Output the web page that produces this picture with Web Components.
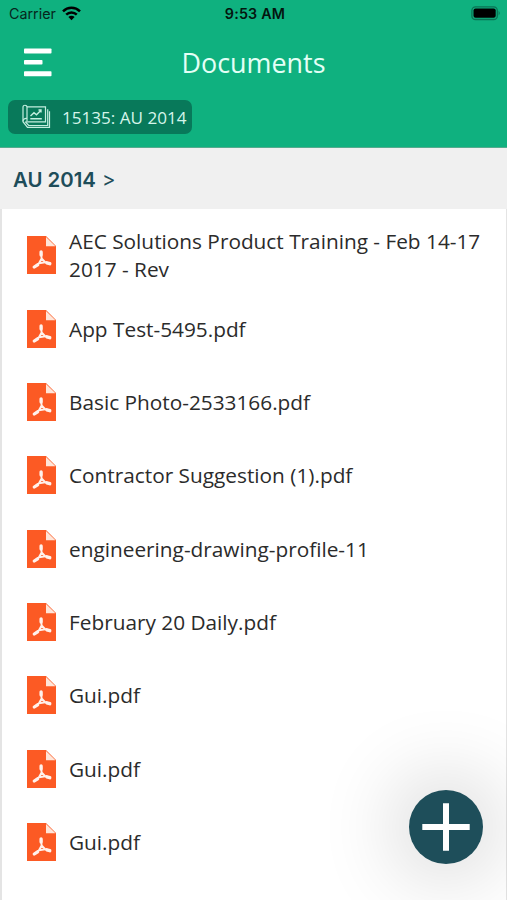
<!DOCTYPE html>
<html lang="en">
<head>
<meta charset="utf-8">
<title>Documents</title>
<style>
  body {
    margin: 0;
    height: 900px;
    overflow: hidden;
    background: #fff;
    font-family: "Open Sans", "Noto Sans", sans-serif;
  }
</style>
</head>
<body>
<docs-app>
  <status-bar slot="header" carrier="Carrier" time="9:53 AM"></status-bar>
  <nav-bar slot="header">Documents</nav-bar>
  <project-chip slot="header">15135: AU 2014</project-chip>
  <bread-crumb slot="path">AU 2014</bread-crumb>
  <file-row>AEC Solutions Product Training - Feb 14-17 2017 - Rev</file-row>
  <file-row>App Test-5495.pdf</file-row>
  <file-row>Basic Photo-2533166.pdf</file-row>
  <file-row>Contractor Suggestion (1).pdf</file-row>
  <file-row>engineering-drawing-profile-11</file-row>
  <file-row>February 20 Daily.pdf</file-row>
  <file-row>Gui.pdf</file-row>
  <file-row>Gui.pdf</file-row>
  <file-row>Gui.pdf</file-row>
  <add-button slot="action"></add-button>
</docs-app>

<script>
class BaseElement extends HTMLElement {
  constructor() {
    super(); // !required!
    this.dom = this.attachShadow({ mode: "open" });
    const template = document.createElement("template");
    template.innerHTML = this.markup();
    this.dom.appendChild(document.importNode(template.content, true));
  }

  markup() {
    return "<slot></slot>";
  }
}

class DocsApp extends BaseElement {
  markup() {
    return `
      <style>
        :host { display: flex; flex-direction: column; position: relative; height: 900px; overflow: hidden; }
        header { box-sizing: border-box; height: 148px; flex: none; background: #0fb17f; border-bottom: 1px solid #55ab8e; }
        main { box-sizing: border-box; flex: 1; padding-top: 9.5px; border: solid #e4e4e4; border-width: 0 1px 0 2px; }
      </style>
      <header><slot name="header"></slot></header>
      <slot name="path"></slot>
      <main><slot></slot></main>
      <slot name="action"></slot>
    `;
  }
}

class StatusBar extends BaseElement {
  markup() {
    return `
      <style>
        :host {
          display: grid; grid-template-columns: 1fr auto 1fr; align-items: center;
          height: 28px; padding: 0 6px 0 9px; color: #06261c;
          font: 14.3px/28px Inter, "Liberation Sans", sans-serif;
        }
        .left { display: flex; align-items: center; gap: 6px; }
        .time { font-weight: 600; color: #04150f; letter-spacing: .2px; }
        .battery { justify-self: end; }
        svg { display: block; margin-top: -2px; }
      </style>
      <div class="left">
        <span class="carrier"></span>
        <svg width="19" height="15" viewBox="0 0 19 15">
          <g fill="none" stroke="#000" stroke-width="2.5">
            <path d="M1 5.3a12.2 12.2 0 0 1 17 0"/>
            <path d="M4.2 8.6a7.6 7.6 0 0 1 10.6 0"/>
          </g>
          <path d="M6.4 11.1a4.4 4.4 0 0 1 6.2 0L9.5 14.2z"/>
        </svg>
      </div>
      <span class="time"></span>
      <svg class="battery" width="30" height="15" viewBox="0 0 30 15">
        <rect x=".9" y=".9" width="25.4" height="12.6" rx="3.6" fill="none" stroke="#0b7355" stroke-width="1.3"/>
        <rect x="2.5" y="2.6" width="22.2" height="9.2" rx="2"/>
        <path d="M27.6 4.8q2.3 2.4 0 4.8z" fill="#0b7355"/>
      </svg>
    `;
  }

  connectedCallback() {
    this.dom.querySelector(".carrier").textContent = this.getAttribute("carrier");
    this.dom.querySelector(".time").textContent = this.getAttribute("time");
  }
}

class NavBar extends BaseElement {
  markup() {
    return `
      <style>
        :host {
          display: grid; grid-template-columns: 1fr auto 1fr; align-items: center;
          height: 70px; padding: 0 23px; color: #e4fff6; font-size: 26.9px; line-height: 40px;
        }
        svg { display: block; margin-top: -2px; }
      </style>
      <svg width="29" height="29" viewBox="0 0 29 29" fill="#fff">
        <rect x="1" y=".5" width="27.5" height="5" rx=".8"/>
        <rect x="1" y="12" width="18.5" height="4.5" rx=".8"/>
        <rect x="1" y="23.2" width="27.5" height="5" rx=".8"/>
      </svg>
      <span><slot></slot></span>
    `;
  }
}

class ProjectChip extends BaseElement {
  markup() {
    return `
      <style>
        :host {
          display: flex; align-items: center; gap: 11px; box-sizing: border-box;
          width: 184px; height: 34px; margin: 2px 0 0 8px; padding-left: 14px;
          border-radius: 7px; background: #08795a; color: #d5f5ea;
          font-size: 17.1px; line-height: 34px; white-space: nowrap;
        }
        svg { display: block; flex: none; margin-top: -1px; }
        span { padding-top: 1px; }
      </style>
      <svg width="29" height="25" viewBox="0 0 29 25" fill="none" stroke="#c3eedf" stroke-width="1.2">
        <path d="M5 2.8h18.5v15H3.4"/>
        <path d="M5 17V3.2C5 .6 1 .6 1 3.2v14.5l4.5 5.7h22V7.2"/>
        <path d="M5 14.4c-2.2-.4-4 .8-4 2.8M3.5 18l3.2 3.5h19V5.2"/>
        <path d="M8.5 12l3.5-3.3 2.5 2L19 6.3M16.5 6H19v2.5M8.3 14.7h11.5" stroke-width="1.4"/>
      </svg>
      <span><slot></slot></span>
    `;
  }
}

class BreadCrumb extends BaseElement {
  markup() {
    return `
      <style>
        :host {
          display: flex; align-items: center; gap: 6px; box-sizing: border-box; flex: none;
          height: 61px; padding: 3px 14px 0 13px; background: #f0f0f0; color: #1e4d5a;
          font: 600 20.4px/30px Inter, "Liberation Sans", sans-serif;
        }
        .sep { font-weight: 400; }
      </style>
      <span><slot></slot></span>
      <span class="sep">&gt;</span>
    `;
  }
}

class FileRow extends BaseElement {
  markup() {
    return `
      <style>
        :host {
          display: flex; align-items: center; gap: 13px; box-sizing: border-box;
          height: 73.35px; padding: 0 20px 0 25px; color: #2b2b2b;
          font-size: 20.8px; line-height: 28px;
        }
        svg { display: block; flex: none; }
      </style>
      <svg width="29" height="38" viewBox="0 0 29 38">
        <path d="M0 0h19l10 10v28H0z" fill="#fc5a24"/>
        <path d="M19 1v9.2h9.5z" fill="#ffe5d8"/>
        <g fill="none" stroke="#fff1eb" stroke-linecap="round" stroke-linejoin="round">
          <path d="M14.2 16.500L14.600 22.500L12 27.200L18.200 26.200L14.600 22.500M12 27.200L7.500 31M18.200 26.200L23 27.500" stroke-width="1.9"/>
          <path d="M14.100 15.800v3.200M10.600 28.800l-3.300 2.200M19.800 26.800l3 .900" stroke-width="3.300"/>
        </g>
      </svg>
      <span><slot></slot></span>
    `;
  }
}

class AddButton extends BaseElement {
  markup() {
    return `
      <style>
        :host {
          position: absolute; right: 24px; bottom: 36.5px; display: block;
          width: 74px; height: 74px; border-radius: 50%; background: #1e4e5a;
          box-shadow: 0 0 80px 14px rgba(0, 0, 0, .16);
        }
        svg { display: block; }
      </style>
      <svg width="74" height="74" viewBox="0 0 74 74" stroke="#fff" stroke-width="6">
        <path d="M13.300 37h47.400M37 13.300v47.400"/>
      </svg>
    `;
  }
}

const elements = {
  "docs-app": DocsApp,
  "status-bar": StatusBar,
  "nav-bar": NavBar,
  "project-chip": ProjectChip,
  "bread-crumb": BreadCrumb,
  "file-row": FileRow,
  "add-button": AddButton
};

Object.keys(elements).forEach(tag => {
  if (window.customElements.get(tag) === undefined) {
    window.customElements.define(tag, elements[tag]);
  }
});
</script>
</body>
</html>
